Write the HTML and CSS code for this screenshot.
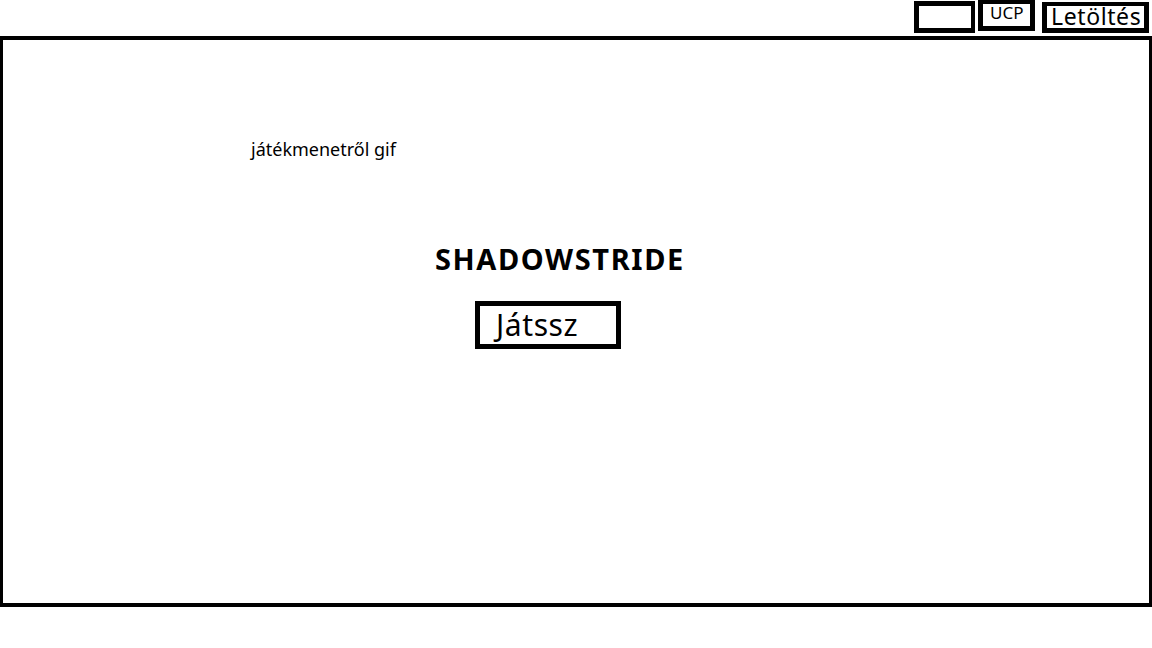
FILE: index.html
```html
<!DOCTYPE html>
<html lang="hu">
<head>
<meta charset="utf-8">
<title>Shadowstride</title>
<link rel="stylesheet" href="styles.css">
</head>
<body>
<header class="topbar">
  <div class="tb-box tb-empty"></div>
  <div class="tb-box tb-ucp">UCP</div>
  <div class="tb-box tb-download">Letöltés</div>
</header>
<main class="frame">
  <p class="gif-note">játékmenetről gif</p>
  <h1 class="title">SHADOWSTRIDE</h1>
  <button class="play">Játssz</button>
</main>
</body>
</html>
```

FILE: styles.css
```css
* { box-sizing: border-box; }
html, body { margin: 0; padding: 0; background: #fff; }
body {
  width: 1152px;
  height: 648px;
  overflow: hidden;
  font-family: "Noto Sans", "Open Sans", "DejaVu Sans", sans-serif;
  color: #000;
}
.topbar {
  height: 36px;
  display: flex;
  justify-content: flex-end;
  align-items: flex-start;
  padding-right: 3px;
}
.tb-box {
  border: 4px solid #000;
  background: #fff;
}
.tb-empty {
  width: 61px;
  height: 32px;
  margin-top: 1px;
  border-width: 5px 4px 5px 5px;
}
.tb-ucp {
  width: 57px;
  height: 31px;
  margin-left: 3px;
  border-width: 4px 5px 5px 5px;
  font-size: 17px;
  line-height: 17px;
  padding-left: 7px;
  padding-top: 0;
}
.tb-download {
  width: 107px;
  height: 31px;
  margin-left: 7px;
  margin-top: 2px;
  border-width: 4px 5px 5px 5px;
  font-size: 23px;
  line-height: 21px;
  padding-left: 4px;
  letter-spacing: 0.6px;
  white-space: nowrap;
}
.frame {
  width: 1152px;
  height: 571px;
  border-style: solid;
  border-color: #000;
  border-width: 4px 3px 4px 3px;
  display: flex;
  flex-direction: column;
  align-items: flex-start;
}
.gif-note {
  margin: 97px 0 0 248px;
  font-size: 18px;
  line-height: 24px;
}
.title {
  margin: 80px 0 0 432px;
  font-size: 29px;
  font-weight: 700;
  line-height: 36px;
  letter-spacing: 1.6px;
}
.play {
  margin: 24px 0 0 472px;
  width: 146px;
  height: 48px;
  border: 5px solid #000;
  background: #fff;
  font-family: inherit;
  font-size: 30px;
  line-height: 36px;
  letter-spacing: 0.6px;
  text-align: left;
  padding: 0 0 0 16px;
  color: #000;
}
```
